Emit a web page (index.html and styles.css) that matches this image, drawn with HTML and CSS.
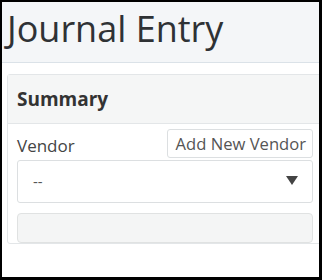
FILE: index.html
```html
<!DOCTYPE html>
<html>
<head>
    <title>Journal Entry</title>
    <link rel="stylesheet" href="styles.css">
</head>
<body>
    <div class="frame">
        <div class="page-header">
            <h1>Journal Entry</h1>
        </div>
        <div class="content">
            <div class="card">
                <div class="card-header">Summary</div>
                <div class="card-body">
                    <div class="label-row">
                        <label>Vendor</label>
                        <button type="button" class="btn-add">Add New Vendor</button>
                    </div>
                    <div class="select">
                        <span>--</span>
                        <span class="caret"></span>
                    </div>
                    <div class="readonly-box"></div>
                </div>
            </div>
        </div>
    </div>
</body>
</html>
```

FILE: styles.css
```css
* {
    box-sizing: border-box;
}
html, body {
    margin: 0;
    padding: 0;
}
body {
    font-family: "Open Sans", "Liberation Sans", sans-serif;
    color: #333;
}
.frame {
    width: 322px;
    height: 280px;
    border: solid #000;
    border-width: 2px 3px 3px 2px;
    overflow: hidden;
    background-color: #fff;
}
.page-header {
    background-color: #f4f6f8;
    border-bottom: 1px solid #dbe2e8;
    padding: 2px 0 9px 5px;
}
.page-header h1 {
    margin: 0;
    font-size: 36px;
    font-weight: 400;
    color: #2f3235;
    line-height: 49px;
}
.content {
    padding: 11px 0 0 5px;
}
.card {
    width: 340px;
    border: 1px solid #e3e6e8;
    border-radius: 3px;
    background-color: #fff;
}
.card-header {
    height: 49px;
    padding: 0 9px;
    background-color: #f5f6f6;
    border-bottom: 1px solid #e3e6e8;
    font-size: 19px;
    font-weight: 700;
    line-height: 48px;
    color: #333;
}
.card-body {
    padding: 5px 0 0 9px;
    width: 305px;
}
.label-row {
    display: flex;
    justify-content: space-between;
    align-items: flex-end;
}
.label-row label {
    font-size: 17px;
    color: #444;
    line-height: 24px;
}
.btn-add {
    font-family: inherit;
    font-size: 16.6px;
    color: #555;
    background-color: #fff;
    border: 1px solid #dcdfe1;
    border-radius: 3px;
    padding: 0 6px 0 8px;
    height: 29px;
    line-height: 26px;
}
.select {
    display: flex;
    justify-content: space-between;
    align-items: center;
    height: 43px;
    margin-top: 2px;
    padding: 0 14px 2px 15px;
    border: 1px solid #dcdfe1;
    border-radius: 3px;
    font-size: 15px;
    color: #555;
}
.caret {
    width: 0;
    height: 0;
    border-left: 6px solid transparent;
    border-right: 6px solid transparent;
    border-top: 9px solid #444;
}
.readonly-box {
    height: 30px;
    margin-top: 10px;
    background-color: #f4f5f5;
    border: 1px solid #e0e2e2;
    border-radius: 4px;
}
```
